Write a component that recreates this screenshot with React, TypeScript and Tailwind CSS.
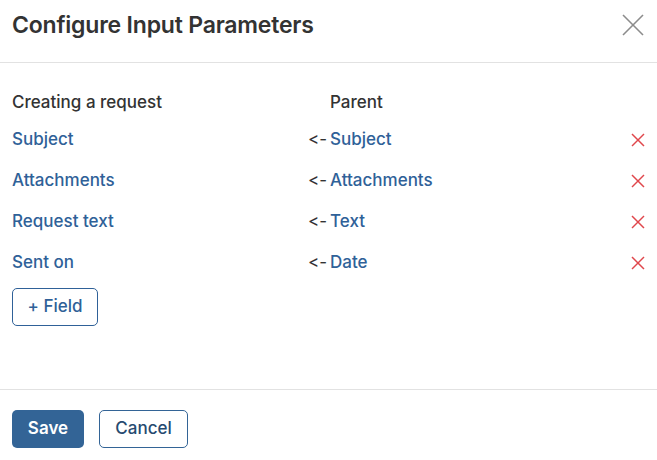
import React from 'react';

interface Mapping {
  target: string;
  source: string;
}

const mappings: Mapping[] = [
  { target: 'Subject', source: 'Subject' },
  { target: 'Attachments', source: 'Attachments' },
  { target: 'Request text', source: 'Text' },
  { target: 'Sent on', source: 'Date' },
];

const CloseIcon = () => (
  <svg width="22" height="22" viewBox="0 0 22 22" fill="none" stroke="#8c8c8c" strokeWidth="1.6">
    <line x1="1" y1="1" x2="21" y2="21" />
    <line x1="21" y1="1" x2="1" y2="21" />
  </svg>
);

const RemoveIcon = () => (
  <svg width="14" height="14" viewBox="0 0 14 14" fill="none" stroke="#e0474c" strokeWidth="1.5">
    <line x1="1" y1="1" x2="13" y2="13" />
    <line x1="13" y1="1" x2="1" y2="13" />
  </svg>
);

export default function App() {
  return (
    <div className="w-[657px] h-[460px] bg-white flex flex-col font-['Inter',sans-serif] text-[#333333] [font-variant-ligatures:none] [font-feature-settings:'calt'_0]">
      {/* Header */}
      <div className="h-[63px] shrink-0 flex items-center justify-between pl-3 pr-[13px] pb-3 border-b border-[#e2e2e2]">
        <h1 className="text-[23px] font-semibold tracking-[-0.2px]">Configure Input Parameters</h1>
        <button>
          <CloseIcon />
        </button>
      </div>

      {/* Body */}
      <div className="flex-1 pt-6 px-3">
        <div className="grid grid-cols-[296px_22px_1fr_auto] text-[17px] font-medium">
          <div className="h-8 flex items-center">Creating a request</div>
          <div />
          <div className="h-8 flex items-center">Parent</div>
          <div />
          {mappings.map((m) => (
            <React.Fragment key={m.target}>
              <div className="h-[41px] flex items-center text-[#2f6198]">{m.target}</div>
              <div className="h-[41px] flex items-center text-[#333] font-normal">&lt;-</div>
              <div className="h-[41px] flex items-center text-[#2f6198]">{m.source}</div>
              <div className="h-[41px] flex items-center justify-end">
                <RemoveIcon />
              </div>
            </React.Fragment>
          ))}
        </div>
        <button className="mt-[5px] h-[38px] w-[86px] rounded-[5px] border border-[#2f6198] text-[#2f6198] text-[17px] font-medium">
          + Field
        </button>
      </div>

      {/* Footer */}
      <div className="h-[71px] shrink-0 border-t border-[#e2e2e2] pt-5 px-3 flex gap-[15px] items-start">
        <button className="h-[38px] w-[72px] rounded-[5px] bg-[#336496] text-white text-[17px] font-semibold">
          Save
        </button>
        <button className="h-[38px] w-[89px] rounded-[5px] border border-[#336496] text-[#264a70] text-[17px] font-medium">
          Cancel
        </button>
      </div>
    </div>
  );
}
